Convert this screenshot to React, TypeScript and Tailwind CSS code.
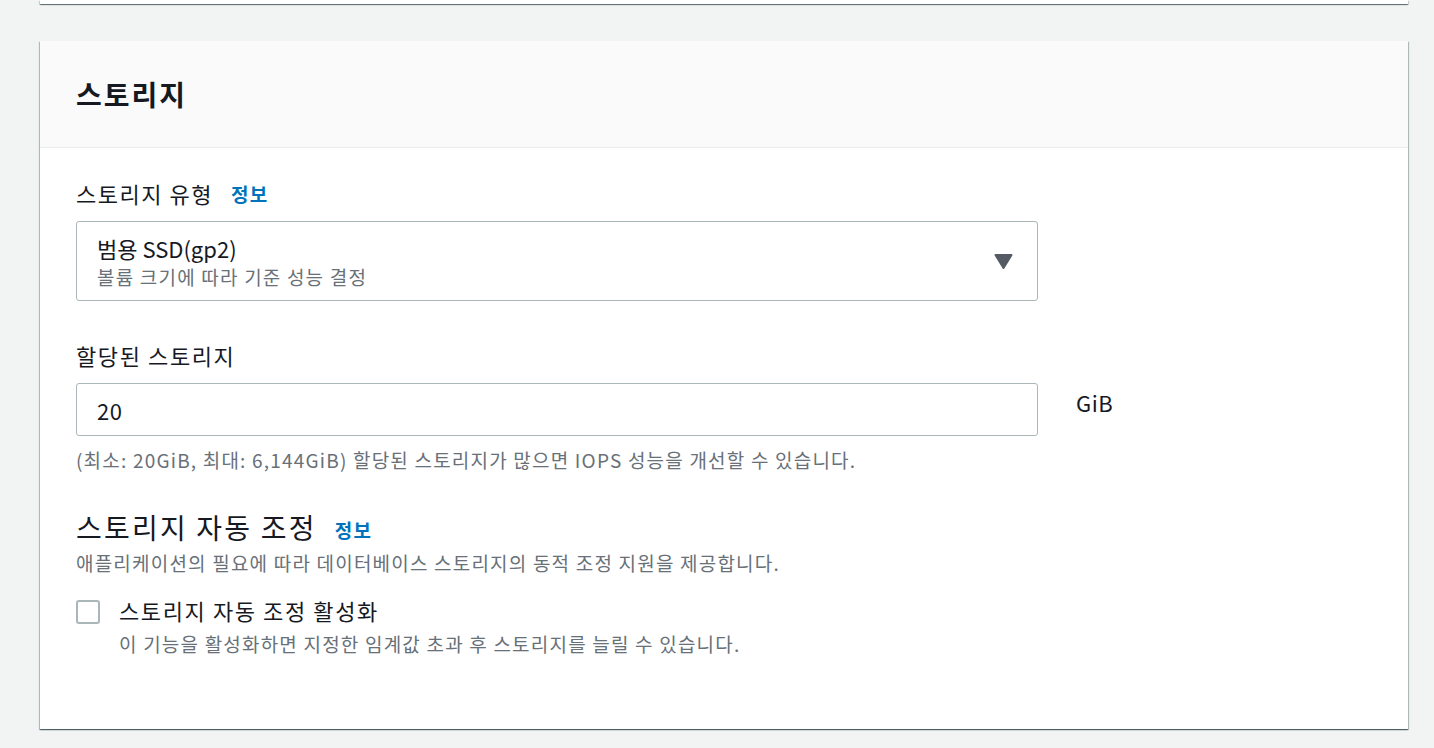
import React from "react";

const font = { fontFamily: '"Noto Sans CJK KR", "Noto Sans", sans-serif' };

const InfoLink = ({ className = "" }: { className?: string }) => (
  <a className={`text-[19px] font-bold tracking-[1.5px] text-[#0073bb] leading-[27px] ${className}`}>정보</a>
);

const App = () => {
  return (
    <div className="h-[748px] overflow-hidden bg-[#f2f3f3] pl-[40px] pr-[26px] text-[#16191f]" style={font}>
      {/* 이전 카드의 하단 */}
      <div className="h-[4px] bg-white shadow-[0_1px_1px_0_rgba(0,28,36,0.5),1px_1px_1px_0_rgba(0,28,36,0.15),-1px_1px_1px_0_rgba(0,28,36,0.15)]" />

      <div className="mt-[37px] bg-white shadow-[0_1px_1px_0_rgba(0,28,36,0.5),1px_1px_1px_0_rgba(0,28,36,0.2),-1px_1px_1px_0_rgba(0,28,36,0.2)]">
        <div className="h-[107px] flex items-center px-[36px] bg-[#fafafa] border-b border-[#eaeded]">
          <h2 className="text-[28px] font-bold tracking-[2px] leading-[36px]">스토리지</h2>
        </div>

        <div className="px-[36px] pt-[30px] pb-[72px]">
          {/* 스토리지 유형 */}
          <div className="flex items-center h-[30px]">
            <span className="text-[22px] tracking-[1.5px] leading-[30px]">스토리지 유형</span>
            <InfoLink className="ml-[18px]" />
          </div>
          <div className="mt-[13px] w-[962px] h-[80px] border border-[#aab7b8] rounded-[3px] flex items-center pl-[20px] pr-[24px]">
            <div className="flex-1 flex flex-col pt-[1px]">
              <span className="text-[22px] leading-[30px]">범용 SSD(gp2)</span>
              <span className="text-[19px] tracking-[1.2px] leading-[27px] text-[#687078]">볼륨 크기에 따라 기준 성능 결정</span>
            </div>
            <svg width="19" height="15" viewBox="0 0 19 15">
              <path d="M1.5 1 H17.5 L9.5 14 Z" fill="#545b64" stroke="#545b64" strokeWidth="2" strokeLinejoin="round" />
            </svg>
          </div>

          {/* 할당된 스토리지 */}
          <div className="mt-[39px] text-[22px] tracking-[1.6px] leading-[30px]">할당된 스토리지</div>
          <div className="mt-[13px] flex items-start">
            <div className="w-[962px] h-[53px] border border-[#aab7b8] rounded-[3px] flex items-center pl-[20px]">
              <span className="text-[22px] tracking-[0.5px] leading-[30px]">20</span>
            </div>
            <span className="ml-[38px] mt-[4px] text-[22px] tracking-[0.5px] leading-[30px]">GiB</span>
          </div>
          <p className="mt-[10px] text-[19px] tracking-[1.2px] leading-[27px] text-[#687078]">
            (최소: 20GiB, 최대: 6,144GiB) 할당된 스토리지가 많으면 IOPS 성능을 개선할 수 있습니다.
          </p>

          {/* 스토리지 자동 조정 */}
          <div className="mt-[36px] flex items-center h-[36px]">
            <span className="text-[28px] tracking-[2.2px] leading-[36px]">스토리지 자동 조정</span>
            <InfoLink className="ml-[18px] mt-[4px]" />
          </div>
          <p className="mt-[4px] text-[19px] tracking-[1.2px] leading-[27px] text-[#687078]">
            애플리케이션의 필요에 따라 데이터베이스 스토리지의 동적 조정 지원을 제공합니다.
          </p>

          <div className="mt-[19px] flex items-start">
            <div className="mt-[5px] w-[24px] h-[24px] border-2 border-[#aab7b8] rounded-[3px] bg-white shrink-0" />
            <div className="ml-[19px] flex flex-col">
              <span className="text-[22px] tracking-[1.6px] leading-[30px]">스토리지 자동 조정 활성화</span>
              <span className="mt-[5px] text-[19px] tracking-[1.2px] leading-[27px] text-[#687078]">
                이 기능을 활성화하면 지정한 임계값 초과 후 스토리지를 늘릴 수 있습니다.
              </span>
            </div>
          </div>
        </div>
      </div>
    </div>
  );
};

export default App;
